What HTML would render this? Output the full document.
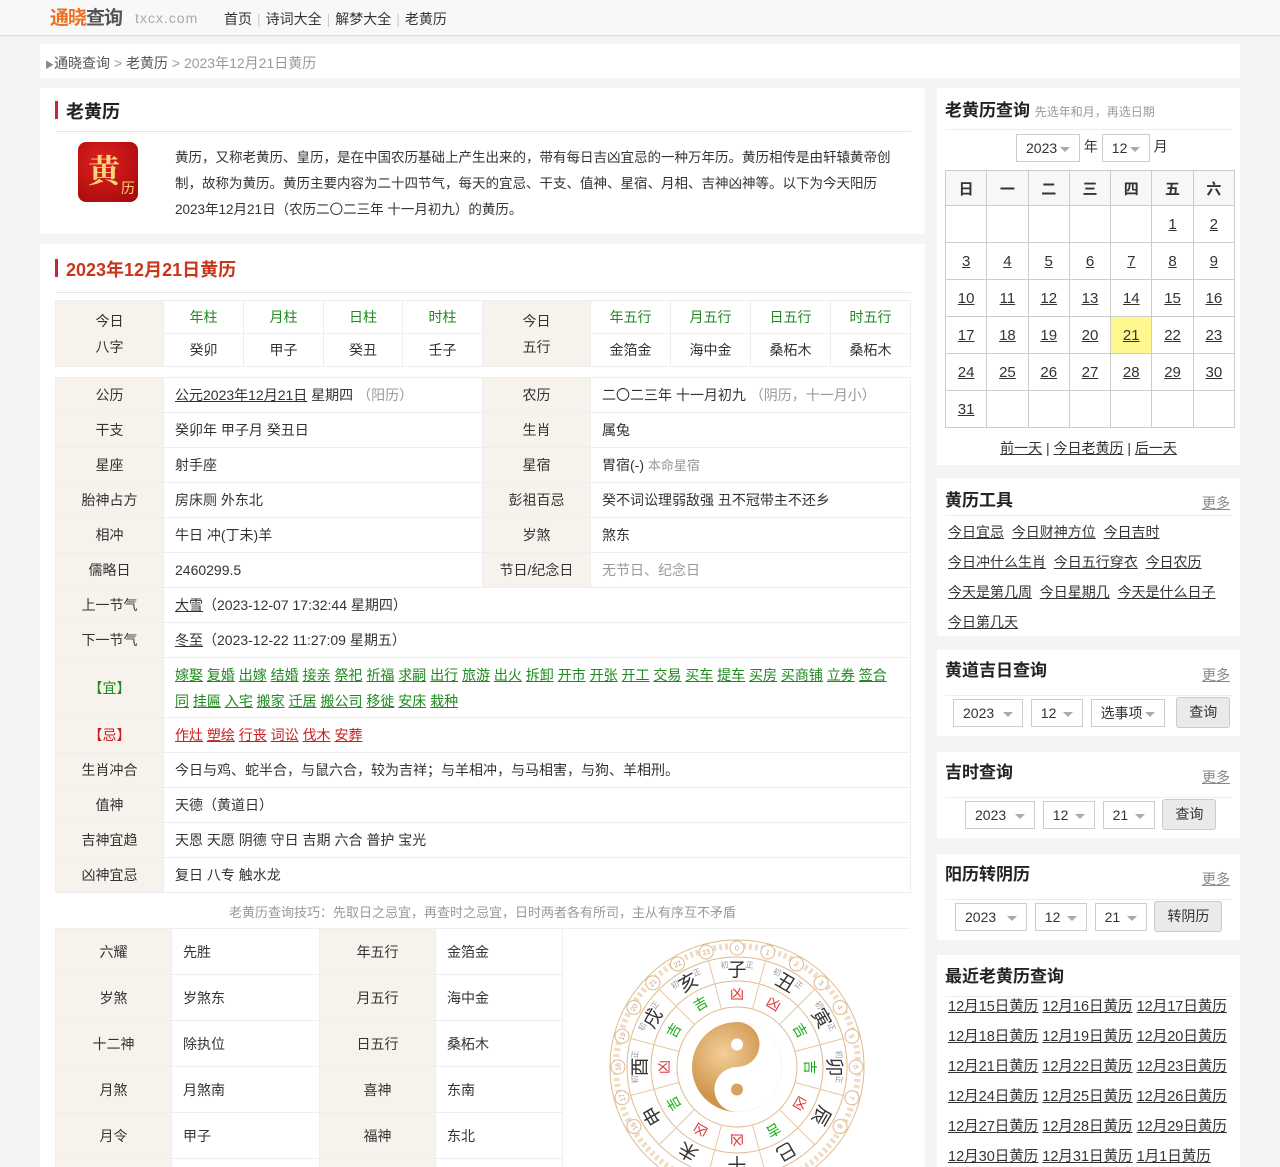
<!DOCTYPE html>
<html style="height:1167px;overflow:hidden"><head><meta charset="utf-8">
<style>
*{margin:0;padding:0;box-sizing:border-box}
body{width:1280px;height:1167px;overflow:hidden;background:#f3f4f6;font-family:"Liberation Sans","Noto Sans CJK SC",sans-serif;font-size:14px;color:#333;position:relative}
.a{position:absolute}
a{color:#333;text-decoration:underline}
.hd{left:0;top:0;width:1280px;height:36px;background:#f8f8f8;border-bottom:1px solid #ddd}
.card{background:#fff}
table{border-collapse:collapse;table-layout:fixed}
td{border:1px solid #eee;text-align:center;font-size:14px}
.lb{background:#f7f2ec}
.v{text-align:left;padding-left:11px}
.g{color:#1f8a1f}
.gr{color:#999}
.cal td{border:1px solid #ccc;height:37px;font-size:15px}
.cal th{border:1px solid #ccc;height:35px;background:#f7f7f7;font-size:15px}
.sel{display:inline-block;border:1px solid #ccc;height:33px;line-height:31px;padding-left:9px;font-size:14px;color:#333;position:relative;background:#fff;vertical-align:middle}
.sel:after{content:"";position:absolute;right:9px;top:12px;border:5px solid transparent;border-top-color:#aaa}
.btn{display:inline-block;border:1px solid #ccc;background:#eaeaea;border-radius:3px;height:33px;line-height:31px;text-align:center;font-size:14px;vertical-align:middle}
.st{font-size:17px;font-weight:bold;color:#222}
.more{font-size:14px;color:#888;text-decoration:underline;position:absolute;right:10px}
.line{position:absolute;left:8px;right:8px;height:1px;background:#eee}
.sep{color:#ccc;margin:0 5px}
</style></head><body>
<div class="a hd">
 <div class="a" style="left:50px;top:3px;font-size:19px;font-weight:bold;color:#f07020;letter-spacing:-1px">通晓<span style="color:#555">查询</span></div>
 <div class="a" style="left:135px;top:10px;font-size:14px;color:#aaa;letter-spacing:1px">txcx.com</div>
 <div class="a" style="left:224px;top:9px;font-size:14px;color:#333">首页<span class="sep">|</span>诗词大全<span class="sep">|</span>解梦大全<span class="sep">|</span>老黄历</div>
</div>
<div class="a card" style="left:40px;top:44px;width:1200px;height:34px">
 <div class="a" style="left:5px;top:9px;font-size:14px;color:#555"><span style="font-size:9px;color:#888">▶</span>通晓查询 <span style="color:#999">&gt;</span> 老黄历 <span style="color:#999">&gt; 2023年12月21日黄历</span></div>
</div>
<div class="a card" style="left:40px;top:88px;width:885px;height:146px">
 <div class="a" style="left:15px;top:13px;width:3px;height:18px;background:#c0283a"></div>
 <div class="a" style="left:26px;top:10px;font-size:18px;font-weight:bold;color:#222">老黄历</div>
 <div class="a" style="left:16px;top:43px;width:855px;height:1px;background:#e5e5e5"></div>
 <div class="a" style="left:38px;top:54px;width:60px;height:60px;border-radius:8px;background:radial-gradient(circle at 40% 35%,#e02020,#a00808)"></div>
 <div class="a" style="left:48px;top:58px;font-size:32px;font-weight:bold;color:#f5d77a;font-family:'Noto Serif CJK SC',serif">黄</div>
 <div class="a" style="left:81px;top:90px;font-size:14px;color:#f5d77a">历</div>
 <div class="a" style="left:135px;top:57px;width:718px;font-size:13.5px;line-height:26px;color:#333">黄历，又称老黄历、皇历，是在中国农历基础上产生出来的，带有每日吉凶宜忌的一种万年历。黄历相传是由轩辕黄帝创制，故称为黄历。黄历主要内容为二十四节气，每天的宜忌、干支、值神、星宿、月相、吉神凶神等。以下为今天阳历2023年12月21日（农历二〇二三年 十一月初九）的黄历。</div>
</div>
<div class="a card" style="left:40px;top:244px;width:885px;height:923px">
 <div class="a" style="left:15px;top:15px;width:3px;height:18px;background:#c0283a"></div>
 <div class="a" style="left:26px;top:12px;font-size:18px;font-weight:bold;color:#c8361c">2023年12月21日黄历</div>
 <div class="a" style="left:16px;top:48px;width:855px;height:1px;background:#e5e5e5"></div>
</div>
<table class="a" style="left:55px;top:300px;width:855px">
<colgroup><col style="width:108px"><col style="width:80px"><col style="width:80px"><col style="width:79px"><col style="width:80px"><col style="width:108px"><col style="width:80px"><col style="width:80px"><col style="width:80px"><col style="width:80px"></colgroup>
<tr style="height:33px"><td class="lb" rowspan="2" style="line-height:26px">今日<br>八字</td><td class="g">年柱</td><td class="g">月柱</td><td class="g">日柱</td><td class="g">时柱</td><td class="lb" rowspan="2" style="line-height:26px">今日<br>五行</td><td class="g">年五行</td><td class="g">月五行</td><td class="g">日五行</td><td class="g">时五行</td></tr>
<tr style="height:33px"><td>癸卯</td><td>甲子</td><td>癸丑</td><td>壬子</td><td>金箔金</td><td>海中金</td><td>桑柘木</td><td>桑柘木</td></tr>
</table>
<table class="a" style="left:55px;top:377px;width:855px">
<colgroup><col style="width:108px"><col style="width:319px"><col style="width:108px"><col style="width:320px"></colgroup>
<tr style="height:35px"><td class="lb">公历</td><td class="v"><a>公元2023年12月21日</a> 星期四 <span class="gr">（阳历）</span></td><td class="lb">农历</td><td class="v">二〇二三年 十一月初九 <span class="gr">（阴历，十一月小）</span></td></tr>
<tr style="height:35px"><td class="lb">干支</td><td class="v">癸卯年 甲子月 癸丑日</td><td class="lb">生肖</td><td class="v">属兔</td></tr>
<tr style="height:35px"><td class="lb">星座</td><td class="v">射手座</td><td class="lb">星宿</td><td class="v">胃宿(-) <span class="gr" style="font-size:13px">本命星宿</span></td></tr>
<tr style="height:35px"><td class="lb">胎神占方</td><td class="v">房床厕 外东北</td><td class="lb">彭祖百忌</td><td class="v">癸不词讼理弱敌强 丑不冠带主不还乡</td></tr>
<tr style="height:35px"><td class="lb">相冲</td><td class="v">牛日 冲(丁未)羊</td><td class="lb">岁煞</td><td class="v">煞东</td></tr>
<tr style="height:35px"><td class="lb">儒略日</td><td class="v">2460299.5</td><td class="lb">节日/纪念日</td><td class="v gr">无节日、纪念日</td></tr>
<tr style="height:35px"><td class="lb">上一节气</td><td class="v" colspan="3"><a>大雪</a>（2023-12-07 17:32:44 星期四）</td></tr>
<tr style="height:35px"><td class="lb">下一节气</td><td class="v" colspan="3"><a>冬至</a>（2023-12-22 11:27:09 星期五）</td></tr>
<tr style="height:60px"><td class="lb g">【宜】</td><td class="v g" colspan="3" style="line-height:26px;padding-right:16px"><a style="color:#1f8a1f">嫁娶</a> <a style="color:#1f8a1f">复婚</a> <a style="color:#1f8a1f">出嫁</a> <a style="color:#1f8a1f">结婚</a> <a style="color:#1f8a1f">接亲</a> <a style="color:#1f8a1f">祭祀</a> <a style="color:#1f8a1f">祈福</a> <a style="color:#1f8a1f">求嗣</a> <a style="color:#1f8a1f">出行</a> <a style="color:#1f8a1f">旅游</a> <a style="color:#1f8a1f">出火</a> <a style="color:#1f8a1f">拆卸</a> <a style="color:#1f8a1f">开市</a> <a style="color:#1f8a1f">开张</a> <a style="color:#1f8a1f">开工</a> <a style="color:#1f8a1f">交易</a> <a style="color:#1f8a1f">买车</a> <a style="color:#1f8a1f">提车</a> <a style="color:#1f8a1f">买房</a> <a style="color:#1f8a1f">买商铺</a> <a style="color:#1f8a1f">立券</a> <a style="color:#1f8a1f">签合同</a> <a style="color:#1f8a1f">挂匾</a> <a style="color:#1f8a1f">入宅</a> <a style="color:#1f8a1f">搬家</a> <a style="color:#1f8a1f">迁居</a> <a style="color:#1f8a1f">搬公司</a> <a style="color:#1f8a1f">移徙</a> <a style="color:#1f8a1f">安床</a> <a style="color:#1f8a1f">栽种</a></td></tr>
<tr style="height:35px"><td class="lb" style="color:#c81e1e">【忌】</td><td class="v" colspan="3"><a style="color:#c81e1e">作灶</a> <a style="color:#c81e1e">塑绘</a> <a style="color:#c81e1e">行丧</a> <a style="color:#c81e1e">词讼</a> <a style="color:#c81e1e">伐木</a> <a style="color:#c81e1e">安葬</a></td></tr>
<tr style="height:35px"><td class="lb">生肖冲合</td><td class="v" colspan="3">今日与鸡、蛇半合，与鼠六合，较为吉祥；与羊相冲，与马相害，与狗、羊相刑。</td></tr>
<tr style="height:35px"><td class="lb">值神</td><td class="v" colspan="3">天德（黄道日）</td></tr>
<tr style="height:35px"><td class="lb">吉神宜趋</td><td class="v" colspan="3">天恩 天愿 阴德 守日 吉期 六合 普护 宝光</td></tr>
<tr style="height:35px"><td class="lb">凶神宜忌</td><td class="v" colspan="3">复日 八专 触水龙</td></tr>
</table>
<div class="a" style="left:55px;top:902px;width:855px;text-align:center;font-size:13px;color:#999">老黄历查询技巧：先取日之忌宜，再查时之忌宜，日时两者各有所司，主从有序互不矛盾</div>
<div class="a" style="left:55px;top:928px;width:855px;height:239px;overflow:hidden">
<table style="width:855px">
<colgroup><col style="width:116px"><col style="width:148px"><col style="width:116px"><col style="width:127px"><col style="width:348px"></colgroup>
<tr style="height:46px"><td class="lb">六耀</td><td class="v">先胜</td><td class="lb">年五行</td><td class="v">金箔金</td><td rowspan="6" style="vertical-align:top;padding:0">
<svg width="346" height="239" viewBox="0 0 346 239" style="display:block">
<g transform="translate(174,138)" font-family="Liberation Sans,Noto Sans CJK SC,sans-serif">
<circle r="127" fill="#fff" stroke="#e0b98c"/>
<circle r="121" fill="none" stroke="#e0b98c" stroke-dasharray="3 3" stroke-width="6" opacity=".5"/>
<circle r="110" fill="none" stroke="#e0b98c"/>
<circle r="86" fill="none" stroke="#e0b98c"/>
<circle r="60" fill="none" stroke="#e0b98c"/>
<g stroke="#e6c7a2">
<line x1="0" y1="-60" x2="0" y2="-110" transform="rotate(15)"/><line x1="0" y1="-60" x2="0" y2="-110" transform="rotate(45)"/><line x1="0" y1="-60" x2="0" y2="-110" transform="rotate(75)"/><line x1="0" y1="-60" x2="0" y2="-110" transform="rotate(105)"/><line x1="0" y1="-60" x2="0" y2="-110" transform="rotate(135)"/><line x1="0" y1="-60" x2="0" y2="-110" transform="rotate(165)"/><line x1="0" y1="-60" x2="0" y2="-110" transform="rotate(195)"/><line x1="0" y1="-60" x2="0" y2="-110" transform="rotate(225)"/><line x1="0" y1="-60" x2="0" y2="-110" transform="rotate(255)"/><line x1="0" y1="-60" x2="0" y2="-110" transform="rotate(285)"/><line x1="0" y1="-60" x2="0" y2="-110" transform="rotate(315)"/><line x1="0" y1="-60" x2="0" y2="-110" transform="rotate(345)"/>
</g>
<g font-size="19" fill="#333" text-anchor="middle">
<text transform="rotate(0) translate(0,-91)">子</text><text transform="rotate(30) translate(0,-91)">丑</text><text transform="rotate(60) translate(0,-91)">寅</text><text transform="rotate(90) translate(0,-91)">卯</text><text transform="rotate(120) translate(0,-91)">辰</text><text transform="rotate(150) translate(0,-91)">巳</text><text transform="rotate(180) translate(0,-91)">午</text><text transform="rotate(210) translate(0,-91)">未</text><text transform="rotate(240) translate(0,-91)">申</text><text transform="rotate(270) translate(0,-91)">酉</text><text transform="rotate(300) translate(0,-91)">戌</text><text transform="rotate(330) translate(0,-91)">亥</text>
</g>
<g font-size="14" text-anchor="middle">
<text fill="#d33" transform="rotate(0) translate(0,-68)">凶</text><text fill="#d33" transform="rotate(30) translate(0,-68)">凶</text><text fill="#1a1" transform="rotate(60) translate(0,-68)">吉</text><text fill="#1a1" transform="rotate(90) translate(0,-68)">吉</text><text fill="#d33" transform="rotate(120) translate(0,-68)">凶</text><text fill="#1a1" transform="rotate(150) translate(0,-68)">吉</text><text fill="#d33" transform="rotate(180) translate(0,-68)">凶</text><text fill="#d33" transform="rotate(210) translate(0,-68)">凶</text><text fill="#1a1" transform="rotate(240) translate(0,-68)">吉</text><text fill="#d33" transform="rotate(270) translate(0,-68)">凶</text><text fill="#1a1" transform="rotate(300) translate(0,-68)">吉</text><text fill="#1a1" transform="rotate(330) translate(0,-68)">吉</text>
</g>
<g font-size="8" fill="#999" text-anchor="middle">
<text transform="rotate(7) translate(0,-100)">正</text><text transform="rotate(-7) translate(0,-100)">初</text><text transform="rotate(23) translate(0,-100)">初</text><text transform="rotate(37) translate(0,-100)">正</text><text transform="rotate(53) translate(0,-100)">初</text><text transform="rotate(67) translate(0,-100)">正</text><text transform="rotate(83) translate(0,-100)">初</text><text transform="rotate(97) translate(0,-100)">正</text><text transform="rotate(-23) translate(0,-100)">正</text><text transform="rotate(-37) translate(0,-100)">初</text><text transform="rotate(-53) translate(0,-100)">正</text><text transform="rotate(-67) translate(0,-100)">初</text><text transform="rotate(-83) translate(0,-100)">正</text><text transform="rotate(-97) translate(0,-100)">初</text>
</g>
<g fill="#fff" stroke="#e0b98c">
<circle cx="0" cy="-119" r="7"/><circle cx="0" cy="-119" r="7" transform="rotate(15)"/><circle cx="0" cy="-119" r="7" transform="rotate(30)"/><circle cx="0" cy="-119" r="7" transform="rotate(45)"/><circle cx="0" cy="-119" r="7" transform="rotate(60)"/><circle cx="0" cy="-119" r="7" transform="rotate(75)"/><circle cx="0" cy="-119" r="7" transform="rotate(90)"/><circle cx="0" cy="-119" r="7" transform="rotate(105)"/><circle cx="0" cy="-119" r="7" transform="rotate(120)"/><circle cx="0" cy="-119" r="7" transform="rotate(240)"/><circle cx="0" cy="-119" r="7" transform="rotate(255)"/><circle cx="0" cy="-119" r="7" transform="rotate(270)"/><circle cx="0" cy="-119" r="7" transform="rotate(285)"/><circle cx="0" cy="-119" r="7" transform="rotate(300)"/><circle cx="0" cy="-119" r="7" transform="rotate(315)"/><circle cx="0" cy="-119" r="7" transform="rotate(330)"/><circle cx="0" cy="-119" r="7" transform="rotate(345)"/>
</g>
<g font-size="7" fill="#c9a27a" text-anchor="middle">
<text transform="rotate(0) translate(0,-116.5)">0</text><text transform="rotate(15) translate(0,-116.5)">1</text><text transform="rotate(30) translate(0,-116.5)">2</text><text transform="rotate(45) translate(0,-116.5)">3</text><text transform="rotate(60) translate(0,-116.5)">4</text><text transform="rotate(75) translate(0,-116.5)">5</text><text transform="rotate(90) translate(0,-116.5)">6</text><text transform="rotate(105) translate(0,-116.5)">7</text><text transform="rotate(120) translate(0,-116.5)">8</text><text transform="rotate(240) translate(0,-116.5)">16</text><text transform="rotate(255) translate(0,-116.5)">17</text><text transform="rotate(270) translate(0,-116.5)">18</text><text transform="rotate(285) translate(0,-116.5)">19</text><text transform="rotate(300) translate(0,-116.5)">20</text><text transform="rotate(315) translate(0,-116.5)">21</text><text transform="rotate(330) translate(0,-116.5)">22</text><text transform="rotate(345) translate(0,-116.5)">23</text>
</g>
<defs><radialGradient id="gd" cx="35%" cy="35%"><stop offset="0" stop-color="#f2cf98"/><stop offset="1" stop-color="#cf954e"/></radialGradient></defs>
<circle r="45" fill="url(#gd)"/>
<path d="M0,-45 A45,45 0 0 1 0,45 A22.5,22.5 0 0 1 0,0 A22.5,22.5 0 0 0 0,-45Z" fill="#fff"/>
<circle cx="0" cy="-22.5" r="6" fill="#fff"/><circle cx="0" cy="22.5" r="6" fill="#d9a35e"/>
</g></svg></td></tr>
<tr style="height:46px"><td class="lb">岁煞</td><td class="v">岁煞东</td><td class="lb">月五行</td><td class="v">海中金</td></tr>
<tr style="height:46px"><td class="lb">十二神</td><td class="v">除执位</td><td class="lb">日五行</td><td class="v">桑柘木</td></tr>
<tr style="height:46px"><td class="lb">月煞</td><td class="v">月煞南</td><td class="lb">喜神</td><td class="v">东南</td></tr>
<tr style="height:46px"><td class="lb">月令</td><td class="v">甲子</td><td class="lb">福神</td><td class="v">东北</td></tr>
<tr style="height:46px"><td class="lb">&nbsp;</td><td></td><td class="lb"></td><td></td></tr>
</table>
</div>

<div class="a card" style="left:937px;top:88px;width:303px;height:377px">
 <div class="a st" style="left:8px;top:8px">老黄历查询 <span style="font-size:12px;font-weight:normal;color:#999">先选年和月，再选日期</span></div>
 <div class="line" style="top:41px"></div>
 <div class="a" style="left:79px;top:46px;font-size:14px"><span class="sel" style="width:64px;height:28px;line-height:26px">2023</span> 年 <span class="sel" style="width:48px;height:28px;line-height:26px">12</span> 月</div>
 <table class="a cal" style="left:8px;top:82px;width:290px">
 <tr><th>日</th><th>一</th><th>二</th><th>三</th><th>四</th><th>五</th><th>六</th></tr>
 <tr><td></td><td></td><td></td><td></td><td></td><td><a>1</a></td><td><a>2</a></td></tr>
 <tr><td><a>3</a></td><td><a>4</a></td><td><a>5</a></td><td><a>6</a></td><td><a>7</a></td><td><a>8</a></td><td><a>9</a></td></tr>
 <tr><td><a>10</a></td><td><a>11</a></td><td><a>12</a></td><td><a>13</a></td><td><a>14</a></td><td><a>15</a></td><td><a>16</a></td></tr>
 <tr><td><a>17</a></td><td><a>18</a></td><td><a>19</a></td><td><a>20</a></td><td style="background:#fff88e"><a>21</a></td><td><a>22</a></td><td><a>23</a></td></tr>
 <tr><td><a>24</a></td><td><a>25</a></td><td><a>26</a></td><td><a>27</a></td><td><a>28</a></td><td><a>29</a></td><td><a>30</a></td></tr>
 <tr><td><a>31</a></td><td></td><td></td><td></td><td></td><td></td><td></td></tr>
 </table>
 <div class="a" style="left:0;top:350px;width:303px;text-align:center;font-size:14px"><a>前一天</a> | <a>今日老黄历</a> | <a>后一天</a></div>
</div>
<div class="a card" style="left:937px;top:478px;width:303px;height:158px">
 <div class="a st" style="left:8px;top:8px">黄历工具</div><a class="more" style="top:15px">更多</a>
 <div class="line" style="top:37px"></div>
 <div class="a" style="left:11px;top:39px;width:290px;font-size:14px;line-height:30px"><a>今日宜忌</a>&nbsp;&nbsp;<a>今日财神方位</a>&nbsp;&nbsp;<a>今日吉时</a><br><a>今日冲什么生肖</a>&nbsp;&nbsp;<a>今日五行穿衣</a>&nbsp;&nbsp;<a>今日农历</a><br><a>今天是第几周</a>&nbsp;&nbsp;<a>今日星期几</a>&nbsp;&nbsp;<a>今天是什么日子</a><br><a>今日第几天</a></div>
</div>
<div class="a card" style="left:937px;top:650px;width:303px;height:86px">
 <div class="a st" style="left:8px;top:6px">黄道吉日查询</div><a class="more" style="top:15px">更多</a>
 <div class="line" style="top:45px"></div>
 <div class="a" style="left:16px;top:47px;white-space:nowrap"><span class="sel" style="width:70px;height:28px;line-height:26px">2023</span>&nbsp;&nbsp;<span class="sel" style="width:52px;height:28px;line-height:26px">12</span>&nbsp;&nbsp;<span class="sel" style="width:74px;height:28px;line-height:26px">选事项</span>&nbsp;&nbsp;&nbsp;<span class="btn" style="width:54px;height:31px;line-height:29px">查询</span></div>
</div>
<div class="a card" style="left:937px;top:752px;width:303px;height:86px">
 <div class="a st" style="left:8px;top:6px">吉时查询</div><a class="more" style="top:15px">更多</a>
 <div class="line" style="top:45px"></div>
 <div class="a" style="left:28px;top:47px;white-space:nowrap"><span class="sel" style="width:70px;height:28px;line-height:26px">2023</span>&nbsp;&nbsp;<span class="sel" style="width:52px;height:28px;line-height:26px">12</span>&nbsp;&nbsp;<span class="sel" style="width:52px;height:28px;line-height:26px">21</span>&nbsp;&nbsp;<span class="btn" style="width:54px;height:31px;line-height:29px">查询</span></div>
</div>
<div class="a card" style="left:937px;top:854px;width:303px;height:86px">
 <div class="a st" style="left:8px;top:6px">阳历转阴历</div><a class="more" style="top:15px">更多</a>
 <div class="line" style="top:45px"></div>
 <div class="a" style="left:18px;top:47px;white-space:nowrap"><span class="sel" style="width:72px;height:28px;line-height:26px">2023</span>&nbsp;&nbsp;<span class="sel" style="width:52px;height:28px;line-height:26px">12</span>&nbsp;&nbsp;<span class="sel" style="width:52px;height:28px;line-height:26px">21</span>&nbsp;&nbsp;<span class="btn" style="width:68px;height:31px;line-height:29px">转阴历</span></div>
</div>
<div class="a card" style="left:937px;top:955px;width:303px;height:212px">
 <div class="a st" style="left:8px;top:7px">最近老黄历查询</div>
 <div class="line" style="top:41px"></div>
 <div class="a" style="left:11px;top:37px;width:295px;font-size:14.5px;line-height:30px;white-space:nowrap"><a>12月15日黄历</a> <a>12月16日黄历</a> <a>12月17日黄历</a><br><a>12月18日黄历</a> <a>12月19日黄历</a> <a>12月20日黄历</a><br><a>12月21日黄历</a> <a>12月22日黄历</a> <a>12月23日黄历</a><br><a>12月24日黄历</a> <a>12月25日黄历</a> <a>12月26日黄历</a><br><a>12月27日黄历</a> <a>12月28日黄历</a> <a>12月29日黄历</a><br><a>12月30日黄历</a> <a>12月31日黄历</a> <a>1月1日黄历</a></div>
</div>
</body></html>
